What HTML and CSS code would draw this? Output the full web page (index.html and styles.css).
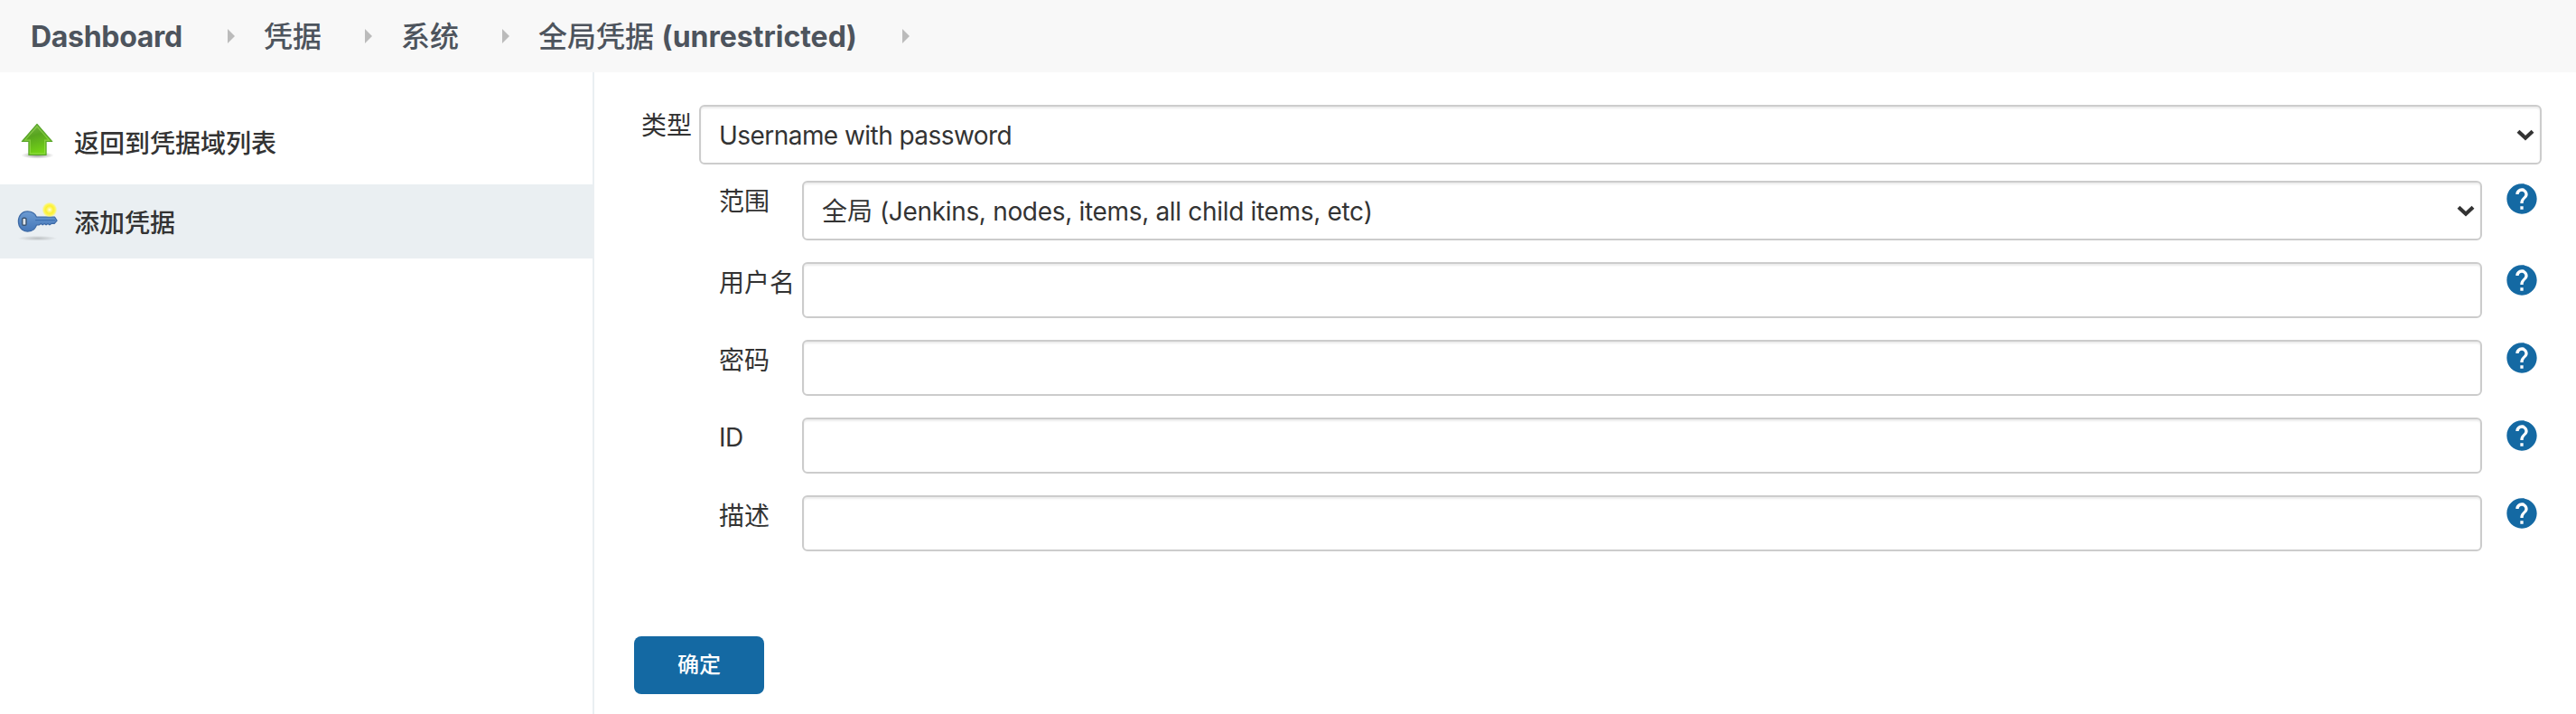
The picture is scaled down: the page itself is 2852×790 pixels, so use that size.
FILE: index.html
```html
<!DOCTYPE html>
<html lang="zh-CN">
<head>
<meta charset="utf-8">
<title>全局凭据 (unrestricted) [Jenkins]</title>
<link rel="stylesheet" href="styles.css">
</head>
<body>
<svg class="defs" width="0" height="0" aria-hidden="true">
  <symbol id="help" viewBox="0 0 24 24"><path d="M12 2C6.48 2 2 6.48 2 12s4.48 10 10 10 10-4.480 10-10S17.520 2 12 2zm1 17h-2v-2h2v2zm2.070-7.750l-.9.920C13.450 12.900 13 13.500 13 15h-2v-.5c0-1.100.450-2.100 1.170-2.830l1.240-1.260c.370-.360.590-.860.590-1.410 0-1.100-.9-2-2-2s-2 .9-2 2H8c0-2.210 1.790-4 4-4s4 1.790 4 4c0 .880-.360 1.680-.930 2.250z"/></symbol>
  <symbol id="chevron" viewBox="0 0 20 13"><path d="M2 2.200 10 9.700 18 2.200" fill="none" stroke="#333" stroke-width="4.200"/></symbol>
</svg>
<header class="breadcrumbs">
  <a class="crumb crumb-latin">Dashboard</a><i class="sep"></i>
  <a class="crumb">凭据</a><i class="sep"></i>
  <a class="crumb">系统</a><i class="sep"></i>
  <a class="crumb">全局凭据 <span class="crumb-paren">(unrestricted)</span></a><i class="sep"></i>
</header>
<div class="page">
  <nav class="side">
    <a class="task">
      <svg class="task-icon" viewBox="0 0 48 48">
        <defs>
          <linearGradient id="g" x1="0" y1="0" x2="0.300" y2="1"><stop offset="0" stop-color="#7fb850"/><stop offset=".45" stop-color="#58a51f"/><stop offset="1" stop-color="#73d216"/></linearGradient>
          <radialGradient id="s"><stop offset="0" stop-color="#000" stop-opacity=".4"/><stop offset="1" stop-color="#000" stop-opacity="0"/></radialGradient>
        </defs>
        <ellipse cx="24.500" cy="39.500" rx="19" ry="4" fill="url(#s)"/>
        <path d="M24 3.500 41.500 23.500H34.500V39H14.500V23.500H6.500z" fill="url(#g)" stroke="#5aa62c" stroke-width="1.200" stroke-linejoin="round"/>
        <path d="M16 37.500V22H10L24 6 38 22H33V37.500z" fill="none" stroke="#a5e35f" stroke-opacity=".55" stroke-width="1.200"/>
      </svg>
      <span class="task-name">返回到凭据域列表</span>
    </a>
    <a class="task task-active">
      <svg class="task-icon" viewBox="0 0 48 48">
        <defs>
          <linearGradient id="k" x1="0" y1="0" x2="0" y2="1"><stop offset="0" stop-color="#6c9bd2"/><stop offset="1" stop-color="#4577b8"/></linearGradient>
          <radialGradient id="y"><stop offset="0" stop-color="#fffef0"/><stop offset=".2" stop-color="#fff98c"/><stop offset=".5" stop-color="#fcf032"/><stop offset=".75" stop-color="#fdf660"/><stop offset="1" stop-color="#fdf76a" stop-opacity="0"/></radialGradient>
        </defs>
        <ellipse cx="24.500" cy="43.500" rx="23" ry="3" fill="url(#s)" opacity=".5"/>
        <path d="M13 12.500C6.500 12.500 2.500 17.500 2.500 24s4.500 11.500 10.500 11.500c5 0 9-3 10.500-7.500h3l2-1.500 2 1.500 2-1.500 2 1.500 2-1.500 2 1.500 2-1.500h3.500l3-3.500-2.500-4H23.500C21.500 14.500 17.500 12.500 13 12.500z" fill="url(#k)" stroke="#3d6aa6" stroke-width="1.300" stroke-linejoin="round"/>
        <path d="M22 22.500H45" stroke="#3d6fb0" stroke-width="1.200"/>
        <rect x="7" y="20" width="4.500" height="8.500" rx="1.500" fill="#dfe5ea" stroke="#3a5472" stroke-width="1.500"/>
        <circle cx="38.500" cy="10.500" r="8.800" fill="url(#y)"/>
      </svg>
      <span class="task-name">添加凭据</span>
    </a>
  </nav>
  <main class="main">
    <form class="form">
      <div class="row row-kind">
        <label class="label">类型</label>
        <div class="select"><span class="value value-kind">Username with password</span><svg class="chevron"><use href="#chevron"/></svg></div>
      </div>
      <div class="fields">
        <div class="row row-scope">
          <label class="label">范围</label>
          <div class="select"><span class="value">全局 <span class="value-scope">(Jenkins, nodes, items, all child items, etc)</span></span><svg class="chevron"><use href="#chevron"/></svg></div>
          <svg class="help"><use href="#help"/></svg>
        </div>
        <div class="row">
          <label class="label">用户名</label><input class="input" type="text"><svg class="help"><use href="#help"/></svg>
        </div>
        <div class="row">
          <label class="label">密码</label><input class="input" type="password"><svg class="help"><use href="#help"/></svg>
        </div>
        <div class="row">
          <label class="label label-id">ID</label><input class="input" type="text"><svg class="help"><use href="#help"/></svg>
        </div>
        <div class="row">
          <label class="label">描述</label><input class="input" type="text"><svg class="help"><use href="#help"/></svg>
        </div>
      </div>
      <button class="submit" type="button">确定</button>
    </form>
  </main>
</div>
</body>
</html>
```
FILE: styles.css
```css
* { box-sizing: border-box; }

body {
  margin: 0;
  height: 790px;
  overflow: hidden;
  display: flex;
  flex-direction: column;
  background: #fff;
  color: #333;
  font: 28px/40px Inter, "Noto Sans CJK SC", sans-serif;
}

.defs { position: absolute; }

/* Breadcrumb bar */
.breadcrumbs {
  flex: none;
  display: flex;
  align-items: center;
  height: 80px;
  padding-left: 34px;
  background: #f8f8f8;
}

.crumb {
  padding-top: 2px;
  color: #4d545d;
  font-size: 32px;
  font-weight: 500;
  line-height: 48px;
  white-space: nowrap;
}

.crumb-latin { width: 170px; font-weight: 700; letter-spacing: -0.3px; }
.crumb-paren { font-weight: 700; }

.sep {
  margin: 0 32px 0 48px;
  border: solid transparent;
  border-width: 8px 0 8px 8px;
  border-left-color: #bbb;
}

.sep:last-child { margin-left: 50px; }

.page { flex: 1; display: flex; }

/* Side panel */
.side {
  width: 658px;
  padding-top: 36px;
  border-right: 2px solid #eaeff2;
}

.task {
  display: flex;
  align-items: center;
  gap: 18px;
  height: 82px;
  margin-bottom: 6px;
  padding: 0 18px;
  font-weight: 500;
}

.task-active { background: #eaeff2; }
.task-icon { width: 46px; height: 46px; }
.task-name { padding-top: 3px; }

/* Form */
.main { flex: 1; padding: 36px 38px 0 44px; }
.form { display: flex; flex-direction: column; }

.row {
  display: grid;
  grid-template-columns: 92px 1fr 66px;
  align-items: start;
  height: 62px;
}

.row-kind {
  grid-template-columns: 64px 1fr;
  height: 66px;
  margin-left: 8px;
}

.row-scope { height: 66px; }

.fields {
  display: flex;
  flex-direction: column;
  gap: 24px;
  margin: 18px 0 0 94px;
}

.label { padding-top: 3px; white-space: nowrap; }
.label-id { padding-top: 2px; letter-spacing: -0.6px; }

.select,
.input {
  width: 100%;
  height: 62px;
  border: 2px solid #ccc;
  border-radius: 6px;
  background: #fff;
  box-shadow: inset 0 2px 2px rgba(0, 0, 0, 0.075);
}

.select {
  display: flex;
  align-items: center;
  justify-content: space-between;
  height: 66px;
  padding: 0 6px 0 20px;
}

.value { padding-top: 2px; }
.value-kind { letter-spacing: -0.55px; }
.value-scope { letter-spacing: -0.32px; }

.chevron { width: 20px; height: 13px; }

.help {
  width: 40px;
  height: 40px;
  margin-left: 24px;
  fill: #1469a3;
}

.submit {
  width: 144px;
  height: 64px;
  margin-top: 94px;
  padding: 0;
  border: 0;
  border-radius: 8px;
  background: #1469a3;
  color: #fff;
  font: 500 24px/36px Inter, "Noto Sans CJK SC", sans-serif;
}
```
